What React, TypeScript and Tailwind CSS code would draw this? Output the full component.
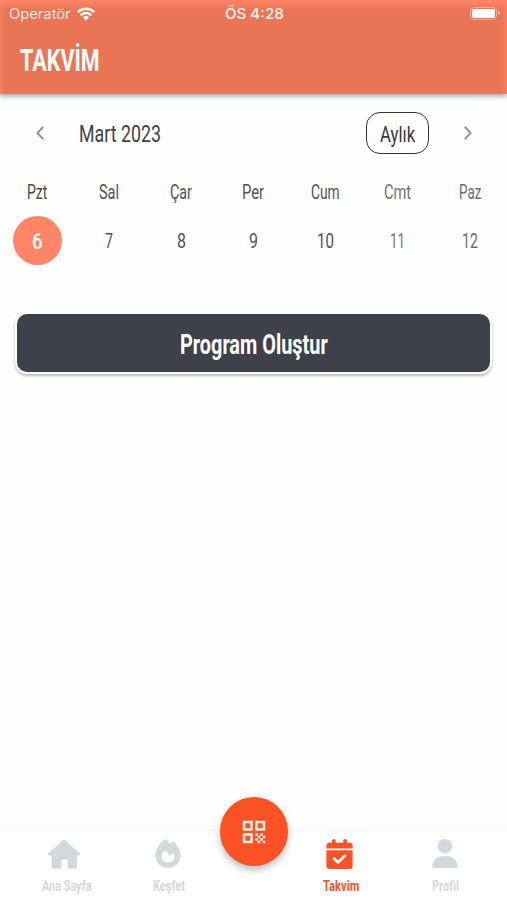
import { useLayoutEffect, useRef, useState } from "react";
import type { ReactNode } from "react";
import { FaFire, FaCalendarCheck, FaUser } from "react-icons/fa6";
import { MdQrCode } from "react-icons/md";

// Condenses a line of text horizontally so that it spans exactly `width` pixels.
function Condensed({ width, className = "", children }: { width: number; className?: string; children: ReactNode }) {
  const ref = useRef<HTMLSpanElement>(null);
  const [scale, setScale] = useState(1);
  useLayoutEffect(() => {
    if (ref.current) setScale(width / ref.current.offsetWidth);
  }, [width, children]);
  return (
    <span className="flex shrink-0 items-center" style={{ width }}>
      <span ref={ref} className={`block shrink-0 origin-left whitespace-nowrap leading-none ${className}`} style={{ transform: `scaleX(${scale})` }}>
        {children}
      </span>
    </span>
  );
}

const days = [
  { name: "Pzt", nameWidth: 20, date: "6", dateWidth: 11, tone: "text-[#47494c]" },
  { name: "Sal", nameWidth: 20, date: "7", dateWidth: 8, tone: "text-[#505254]" },
  { name: "Çar", nameWidth: 22, date: "8", dateWidth: 9, tone: "text-[#505254]" },
  { name: "Per", nameWidth: 22, date: "9", dateWidth: 9, tone: "text-[#505254]" },
  { name: "Cum", nameWidth: 29, date: "10", dateWidth: 17, tone: "text-[#505254]" },
  { name: "Cmt", nameWidth: 27, date: "11", dateWidth: 15, tone: "text-[#727375]" },
  { name: "Paz", nameWidth: 22, date: "12", dateWidth: 16, tone: "text-[#6a6b6d]" },
];

function Chevron({ flip = false }: { flip?: boolean }) {
  return (
    <svg viewBox="0 0 8 14" className={`h-[14px] w-2 ${flip ? "-scale-x-100" : ""}`} fill="none" stroke="#959595" strokeWidth="2">
      <path d="M7.3 .8 1.4 7l5.9 6.2" />
    </svg>
  );
}

function HomeIcon() {
  return (
    <svg viewBox="0 0 34 30" className="-ml-[5px] h-[30px] w-[34px]" fill="currentColor" stroke="currentColor" strokeWidth="1" strokeLinejoin="round">
      <path d="M17 1 32.5 14.5V16H29.5V29H21V20H14V29H5V16H1.5V14.5Z" />
    </svg>
  );
}

function Tab({ icon, label, width, active = false }: { icon: ReactNode; label: string; width: number; active?: boolean }) {
  return (
    <div className={`flex w-[50px] flex-col items-center ${active ? "text-[#fb5227]" : "text-[#d3d8dd]"}`}>
      <div className="flex h-[29px] items-center">{icon}</div>
      <div className="mt-[11px] flex h-4 items-center">
        <Condensed width={width} className="text-[15.5px] font-bold">{label}</Condensed>
      </div>
    </div>
  );
}

export default function App() {
  return (
    <div className="flex h-[900px] w-[507px] flex-col overflow-hidden bg-[#fefefe] font-['Roboto',sans-serif]">
      <header className="h-[94px] shrink-0 bg-[#e97556] text-white shadow-[0_2px_5px_rgba(60,70,80,0.5),inset_0_4px_6px_1px_#ff8566]">
        <div className="grid h-7 grid-cols-3 items-center pr-[7px] pl-[9px] font-['Inter',sans-serif] text-[#ffe9e0]">
          <div className="flex items-center gap-[6px]">
            <Condensed width={62} className="text-[14px]">Operatör</Condensed>
            <svg viewBox="0 0 18 14" className="h-[14px] w-[18px]" fill="none" stroke="white" strokeWidth="2.4">
              <path d="M.8 5.2a11.6 11.6 0 0 1 16.4 0M3.6 8.3a7.6 7.6 0 0 1 10.8 0" />
              <path d="M9 13.5 5.9 10.4a4.4 4.4 0 0 1 6.2 0Z" fill="white" stroke="none" />
            </svg>
          </div>
          <div className="flex justify-center">
            <Condensed width={59} className="text-[14px] font-semibold">ÖS 4:28</Condensed>
          </div>
          <div className="mb-[2px] flex items-center justify-end">
            <div className="flex h-[13px] w-[27px] items-center justify-center rounded-[4px] border border-[#ffad95]">
              <div className="h-[9px] w-[23px] rounded-[2px] bg-white" />
            </div>
            <div className="ml-px h-[4px] w-[2px] rounded-r-full bg-[#ffad95]" />
          </div>
        </div>
        <div className="flex h-[64px] items-center pl-[20px]">
          <Condensed width={80} className="text-[31px] font-bold">TAKVİM</Condensed>
        </div>
      </header>

      <div className="mt-[18px] flex h-[42px] shrink-0 items-center pr-[35px] pl-[36px]">
        <Chevron />
        <div className="mt-[2px] ml-[35px] flex flex-1 text-[#3e4145]">
          <Condensed width={82} className="text-[23px]">Mart 2023</Condensed>
        </div>
        <button className="flex h-[42px] w-[63px] items-center justify-center rounded-[14px] border-[1.5px] border-[#333] pt-[2px] text-[#35373a]">
          <Condensed width={35} className="text-[22.5px]">Aylık</Condensed>
        </button>
        <div className="ml-[35px] flex"><Chevron flip /></div>
      </div>

      <div className="mt-[26px] grid shrink-0 grid-cols-7 px-px">
        {days.map((day, i) => (
          <div key={day.date} className={`flex flex-col items-center ${day.tone}`}>
            <div className="flex h-6 items-center pt-px">
              <Condensed width={day.nameWidth} className="text-[19.5px]">{day.name}</Condensed>
            </div>
            <div className={`mt-[12px] flex h-[49px] w-[49px] items-center justify-center rounded-full pt-[2px] ${i === 0 ? "bg-[#ff8566] text-white" : ""}`}>
              <Condensed width={day.dateWidth} className={i === 0 ? "text-[22px] font-medium" : "text-[19.5px]"}>{day.date}</Condensed>
            </div>
          </div>
        ))}
      </div>

      <button className="mx-[15px] mt-[47px] flex h-[62px] shrink-0 items-center justify-center rounded-[12px] border-2 border-white bg-[#3e4149] pt-[4px] text-white shadow-[0_2px_3px_rgba(80,85,75,0.4)]">
        <Condensed width={148} className="text-[28.5px] font-bold">Program Oluştur</Condensed>
      </button>

      <nav className="relative mt-auto flex h-[70px] shrink-0 border-t border-[#f5f5f6] bg-white pt-[8px]">
        <div className="ml-[39px] flex gap-[54px]">
          <div className="w-[53px] pl-[2px]">
            <Tab icon={<HomeIcon />} label="Ana Sayfa" width={49} />
          </div>
          <div className="-ml-[2px]">
            <Tab icon={<FaFire className="-ml-[3px] h-[29px] w-[26px]" />} label="Keşfet" width={32} />
          </div>
        </div>
        <div className="ml-[122px] flex gap-[54px]">
          <Tab active icon={<FaCalendarCheck className="-ml-[3px] h-[30px] w-[27px]" />} label="Takvim" width={36} />
          <Tab icon={<FaUser className="h-[29px] w-[26px]" />} label="Profil" width={27} />
        </div>
        <button className="absolute -top-[34px] left-[220px] flex h-[69px] w-[68px] items-center justify-center rounded-full bg-[#fc5226] text-[#fff0e6] shadow-[0_4px_7px_rgba(70,70,70,0.35)]">
          <MdQrCode className="h-[30px] w-[30px]" />
        </button>
      </nav>
    </div>
  );
}
